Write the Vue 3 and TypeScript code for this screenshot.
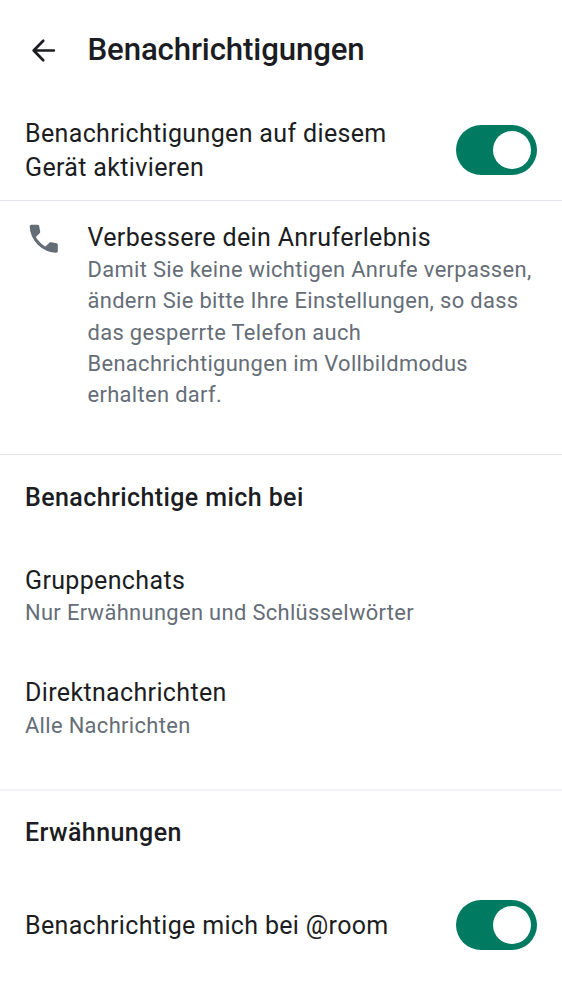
<script setup lang="ts">
import { ref } from 'vue'

const deviceEnabled = ref(true)
const roomEnabled = ref(true)
const modes = [
  { title: 'Gruppenchats', detail: 'Nur Erwähnungen und Schlüsselwörter' },
  { title: 'Direktnachrichten', detail: 'Alle Nachrichten' },
]
</script>

<template>
  <main class="screen">
    <header class="bar">
      <svg class="back" viewBox="0 0 24 24" aria-hidden="true">
        <path d="M20 12H4.8M11.8 4.4L4.4 12L11.8 19.6" fill="none" stroke="currentColor" stroke-width="2.1" stroke-linecap="round" stroke-linejoin="round" />
      </svg>
      <h1>Benachrichtigungen</h1>
    </header>

    <section class="row device">
      <span class="title">Benachrichtigungen auf diesem<br />Gerät aktivieren</span>
      <button class="switch" :class="{ on: deviceEnabled }" aria-label="Benachrichtigungen" @click="deviceEnabled = !deviceEnabled"></button>
    </section>

    <section class="call">
      <svg class="phone" viewBox="0 0 24 24" aria-hidden="true">
        <path d="M19.95 21q-3.125 0-6.175-1.362t-5.55-3.863-3.862-5.55T3 4.05q0-.45.3-.75t.75-.3H8.1q.35 0 .625.238t.325.562l.65 3.5q.05.4-.025.675T9.4 8.45L6.975 10.9q.5.925 1.187 1.787t1.513 1.663q.775.775 1.625 1.438T13.1 17l2.35-2.35q.225-.225.588-.337t.712-.063l3.45.7q.35.1.575.363T21 15.9v4.05q0 .45-.3.75t-.75.3" fill="currentColor" />
      </svg>
      <div>
        <div class="title">Verbessere dein Anruferlebnis</div>
        <div class="detail">Damit Sie keine wichtigen Anrufe verpassen,<br />ändern Sie bitte Ihre Einstellungen, so dass<br />das gesperrte Telefon auch<br />Benachrichtigungen im Vollbildmodus<br />erhalten darf.</div>
      </div>
    </section>

    <section class="group modes">
      <h2>Benachrichtige mich bei</h2>
      <div v-for="mode in modes" :key="mode.title" class="mode">
        <div class="title">{{ mode.title }}</div>
        <div class="detail">{{ mode.detail }}</div>
      </div>
    </section>

    <section class="group mentions">
      <h2>Erwähnungen</h2>
      <div class="row room">
        <span class="title">Benachrichtige mich bei @room</span>
        <button class="switch" :class="{ on: roomEnabled }" aria-label="@room" @click="roomEnabled = !roomEnabled"></button>
      </div>
    </section>
  </main>
</template>

<style>
body {
  margin: 0;
  background: #fff;
}
</style>

<style scoped>
.screen {
  width: 562px;
  height: 1000px;
  box-sizing: border-box;
  overflow: hidden;
  background: #fff;
  color: #1b1d22;
  font-family: Roboto, 'Noto Sans', sans-serif;
}
.bar {
  display: flex;
  align-items: center;
  height: 100px;
  padding-left: 28px;
}
.back {
  width: 31px;
  height: 31px;
  margin-right: 28.5px;
}
h1 {
  margin: 0;
  font-size: 31.2px;
  font-weight: 500;
  line-height: 40px;
  letter-spacing: -0.12px;
}
.row {
  display: flex;
  align-items: center;
  justify-content: space-between;
  padding: 0 25px;
}
.device {
  height: 100px;
}
.title {
  font-size: 25px;
  line-height: 34px;
  letter-spacing: 0.35px;
}
.row > .title {
  padding-top: 2px;
}
.room > .title {
  letter-spacing: 0.33px;
}
.detail {
  color: #656d77;
  font-size: 21.9px;
  line-height: 31.25px;
  letter-spacing: 0.34px;
}
.switch {
  display: flex;
  justify-content: flex-start;
  align-items: center;
  flex: none;
  width: 81px;
  height: 50px;
  padding: 0 6px;
  border: 0;
  border-radius: 25px;
  background: #656d77;
}
.switch.on {
  justify-content: flex-end;
  background: #007a61;
}
.switch::before {
  content: '';
  width: 38px;
  height: 38px;
  border-radius: 50%;
  background: #fff;
}
.call {
  display: flex;
  box-sizing: border-box;
  height: 254px;
  padding: 19px 25px 0;
  border-top: 1px solid #e3e7ed;
}
.call .title {
  padding-top: 1px;
  margin-bottom: -1px;
}
.phone {
  flex: none;
  width: 37.5px;
  height: 37.5px;
  margin-right: 25px;
  color: #656d77;
}
.group {
  border-top: 1px solid #e3e7ed;
}
.modes {
  box-sizing: border-box;
  height: 335px;
}
h2 {
  margin: 0;
  padding: 26px 25px 0;
  font-size: 25px;
  font-weight: 500;
  line-height: 34px;
  letter-spacing: 0.41px;
}
.mentions {
  border-top: 2px solid #f1f3f8;
}
.mentions h2 {
  padding-top: 25px;
}
.mode {
  height: 112px;
  padding: 0 25px;
}
h2 + .mode {
  margin-top: 49px;
}
.mode .detail {
  margin-top: -1px;
}
.mode:last-child .detail {
  margin-top: 0;
}
.room {
  height: 50px;
  margin-top: 50px;
}
</style>
